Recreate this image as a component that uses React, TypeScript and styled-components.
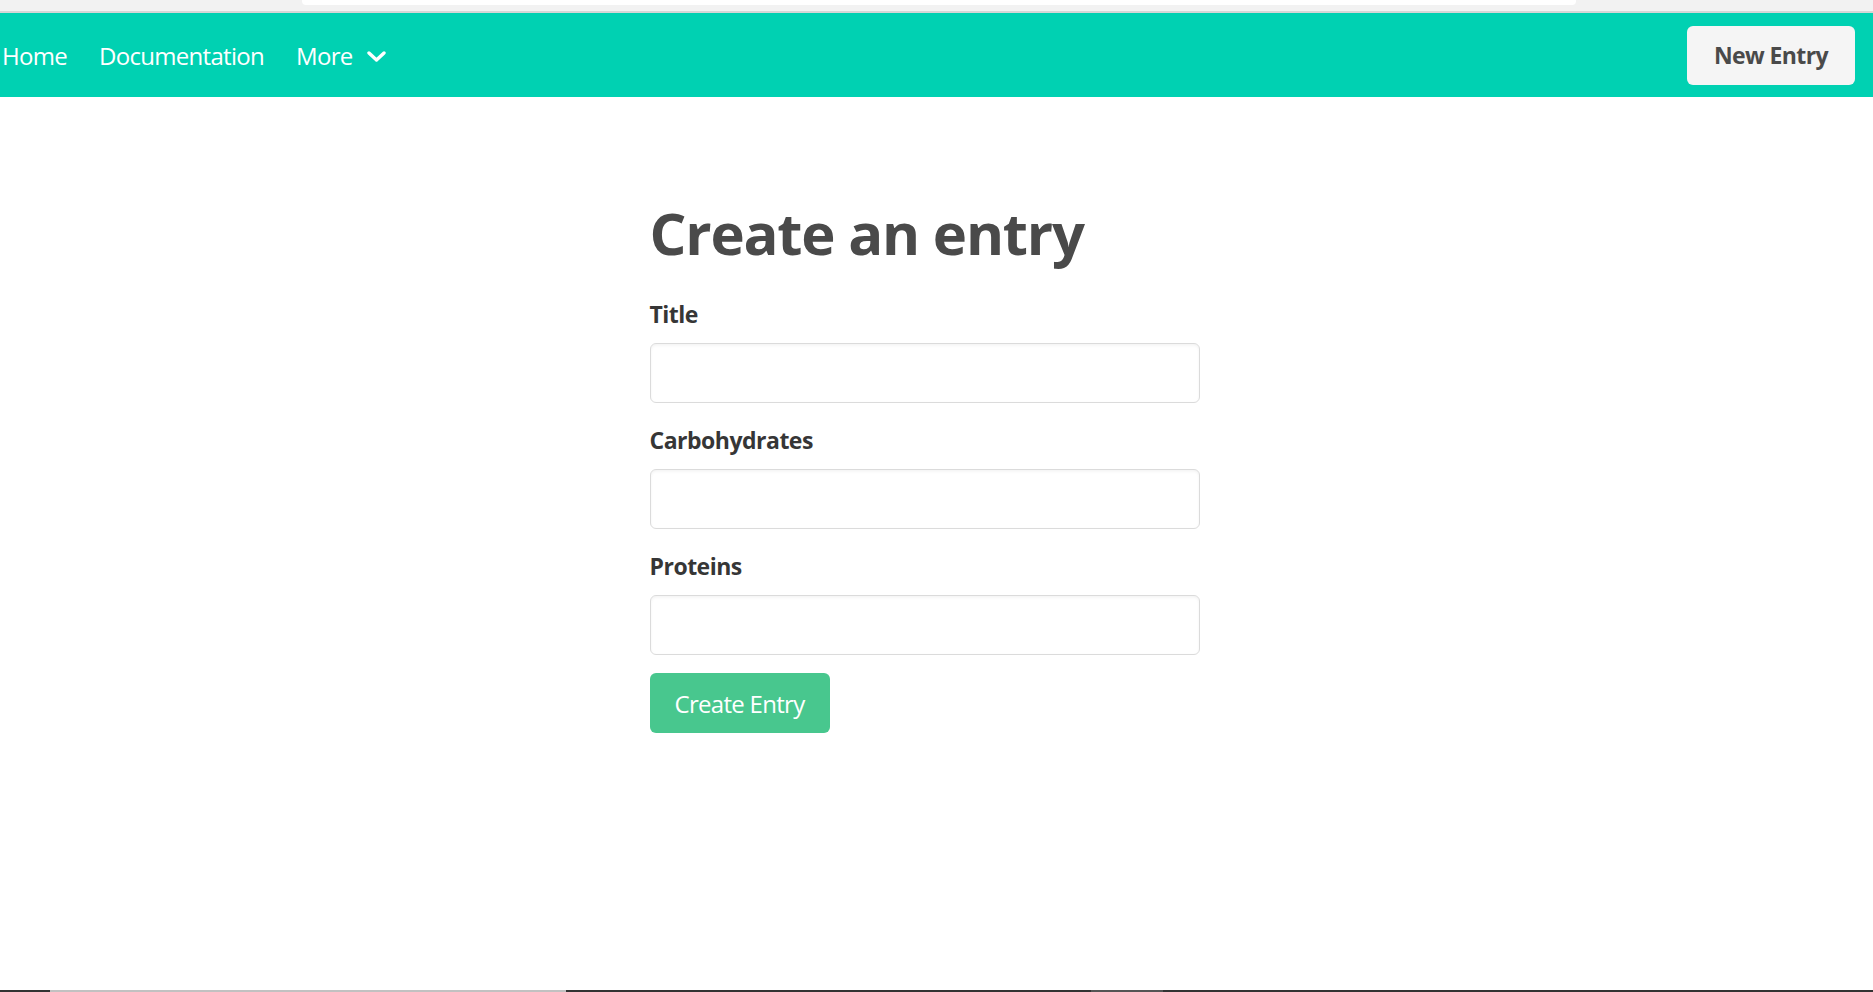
import React from "react";
import styled, { createGlobalStyle } from "styled-components";

const GlobalStyle = createGlobalStyle`
  html,
  body {
    margin: 0;
    padding: 0;
    background: #ffffff;
    font-family: "Open Sans", "Noto Sans", sans-serif;
  }

  * {
    box-sizing: border-box;
  }
`;

const Page = styled.div`
  min-height: 100vh;
  display: flex;
  flex-direction: column;
  overflow: hidden;
`;

const Chrome = styled.div`
  height: 13px;
  display: flex;
  align-items: flex-start;
  padding-left: 302px;
  background: #f2f2f2;
  border-bottom: 2px solid #d6d6d6;
`;

const AddressBar = styled.div`
  width: 1274px;
  height: 5px;
  background: #ffffff;
  border-radius: 0 0 4px 4px;
`;

const Navbar = styled.nav`
  height: 84px;
  display: flex;
  align-items: center;
  justify-content: space-between;
  background: #00d1b2;
`;

const NavStart = styled.div`
  display: flex;
  align-items: center;
  margin-left: -14px;
  padding-top: 2px;
`;

const NavItem = styled.a`
  display: flex;
  align-items: center;
  gap: 14px;
  padding: 0 16px;
  color: #ffffff;
  font-size: 24px;
  letter-spacing: -0.7px;
  line-height: 1.5;
  text-decoration: none;
  cursor: pointer;
`;

const NavEnd = styled.div`
  display: flex;
  align-items: center;
  padding-right: 18px;
`;

const LightButton = styled.button`
  height: 59px;
  padding: 0 27px;
  border: 0;
  border-radius: 6px;
  background: #f5f5f5;
  color: #4a4a4a;
  font-family: inherit;
  font-size: 23px;
  font-weight: 700;
  letter-spacing: -0.6px;
  cursor: pointer;
`;

const Main = styled.main`
  display: flex;
  justify-content: center;
  padding: 102px 24px 0 0;
`;

const Column = styled.form`
  width: 550px;
`;

const Title = styled.h1`
  margin: 0 0 29px;
  color: #4a4a4a;
  font-size: 58px;
  font-weight: 700;
  letter-spacing: -1.2px;
  line-height: 1.16;
`;

const Field = styled.div`
  margin-bottom: 18px;
`;

const Label = styled.label`
  display: block;
  margin-bottom: 11px;
  padding-top: 1px;
  color: #363636;
  font-size: 23px;
  font-weight: 700;
  letter-spacing: -0.5px;
  line-height: 36px;
`;

const Input = styled.input`
  display: block;
  width: 100%;
  height: 60px;
  padding: 0 18px;
  border: 1px solid #dbdbdb;
  border-radius: 6px;
  box-shadow: inset 0 0.0625em 0.125em rgba(10, 10, 10, 0.05);
  font-family: inherit;
  font-size: 24px;
  color: #363636;
  outline: none;
`;

const SubmitButton = styled.button`
  height: 60px;
  padding: 0 25px;
  border: 0;
  border-radius: 6px;
  background: #48c78e;
  color: #ffffff;
  font-family: inherit;
  font-size: 24px;
  letter-spacing: -0.7px;
  cursor: pointer;
`;

const BottomStrip = styled.div`
  margin-top: auto;
  height: 2px;
  display: flex;
  background: #333333;
`;

const StripSegment = styled.div<{ $width: number; $color: string }>`
  width: ${(p) => p.$width}px;
  background: ${(p) => p.$color};
`;

const Chevron = () => (
  <svg width="19" height="11" viewBox="0 0 19 11" fill="none">
    <polyline
      points="2,2 9.5,9 17,2"
      stroke="#ffffff"
      strokeWidth="3.4"
      strokeLinecap="round"
      strokeLinejoin="round"
    />
  </svg>
);

const fields = ["Title", "Carbohydrates", "Proteins"];

export default function App() {
  return (
    <Page>
      <GlobalStyle />
      <Chrome>
        <AddressBar />
      </Chrome>
      <Navbar>
        <NavStart>
          <NavItem>Home</NavItem>
          <NavItem>Documentation</NavItem>
          <NavItem>
            More
            <Chevron />
          </NavItem>
        </NavStart>
        <NavEnd>
          <LightButton>New Entry</LightButton>
        </NavEnd>
      </Navbar>
      <Main>
        <Column onSubmit={(e) => e.preventDefault()}>
          <Title>Create an entry</Title>
          {fields.map((name) => (
            <Field key={name}>
              <Label>{name}</Label>
              <Input type="text" />
            </Field>
          ))}
          <SubmitButton type="submit">Create Entry</SubmitButton>
        </Column>
      </Main>
      <BottomStrip>
        <StripSegment $width={50} $color="#333333" />
        <StripSegment $width={516} $color="#c1c1c1" />
        <StripSegment $width={525} $color="#333333" />
        <StripSegment $width={72} $color="#555555" />
      </BottomStrip>
    </Page>
  );
}
